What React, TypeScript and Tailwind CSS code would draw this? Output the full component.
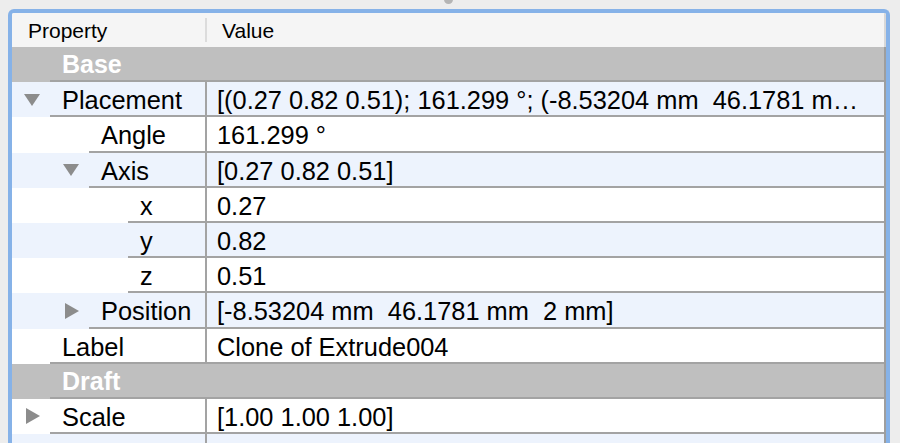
import React from "react";

type Row =
  | { kind: "group"; label: string }
  | {
      kind: "prop";
      level: number;
      expand?: "down" | "right";
      label: string;
      value: string;
    };

const rows: Row[] = [
  { kind: "group", label: "Base" },
  {
    kind: "prop",
    level: 0,
    expand: "down",
    label: "Placement",
    value: "[(0.27 0.82 0.51); 161.299 °; (-8.53204 mm  46.1781 m…",
  },
  { kind: "prop", level: 1, label: "Angle", value: "161.299 °" },
  { kind: "prop", level: 1, expand: "down", label: "Axis", value: "[0.27 0.82 0.51]" },
  { kind: "prop", level: 2, label: "x", value: "0.27" },
  { kind: "prop", level: 2, label: "y", value: "0.82" },
  { kind: "prop", level: 2, label: "z", value: "0.51" },
  {
    kind: "prop",
    level: 1,
    expand: "right",
    label: "Position",
    value: "[-8.53204 mm  46.1781 mm  2 mm]",
  },
  { kind: "prop", level: 0, label: "Label", value: "Clone of Extrude004" },
  { kind: "group", label: "Draft" },
  { kind: "prop", level: 0, expand: "right", label: "Scale", value: "[1.00 1.00 1.00]" },
  { kind: "prop", level: 0, label: "", value: "" },
];

function Tri({ dir }: { dir: "down" | "right" }) {
  if (dir === "down") {
    return (
      <svg width="16" height="12" viewBox="0 0 16 12" className="block">
        <polygon points="0,0 16,0 8,12" fill="#8c8c8c" />
      </svg>
    );
  }
  return (
    <svg width="14" height="16" viewBox="0 0 14 16" className="block">
      <polygon points="0,0 14,8 0,16" fill="#8c8c8c" />
    </svg>
  );
}

export default function App() {
  return (
    <div
      className="relative w-[900px] h-[443px] overflow-hidden bg-[#ededed]"
      style={{ fontFamily: '"Liberation Sans", Arial, sans-serif' }}
    >
      <div className="absolute left-[444px] top-[-5px] w-[9px] h-[9px] rounded-full bg-[#b5b5b5]" />
      <div className="h-full pt-[9px] pl-[8px] pr-[10px]">
        <div className="h-full border-[4px] border-b-0 border-[#86b2e8] rounded-t-[6px] bg-white overflow-hidden flex flex-col">
          {/* header */}
          <div className="h-[34px] shrink-0 flex bg-[#f5f5f5] text-[21px] text-black border-r-2 border-[#d8d8d8]">
            <div className="w-[193px] pl-[16px] pt-[1px] flex items-center">Property</div>
            <div className="w-[2px] my-[5px] bg-[#dcdcdc]" />
            <div className="flex-1 pl-[15px] pt-[1px] flex items-center">Value</div>
          </div>
          {rows.map((r, i) => {
            const bg =
              r.kind === "group" ? "bg-[#bfbfbf]" : i % 2 === 1 ? "bg-[#edf3fd]" : "bg-white";
            if (r.kind === "group") {
              return (
                <div
                  key={i}
                  className={`h-[35.2px] shrink-0 flex border-r-2 border-[#9e9e9e] ${bg}`}
                >
                  <div className="w-[38px] shrink-0" />
                  <div className="flex-1 pl-[12px] pt-[3px] flex items-center border-b-2 border-[#a3a3a3] text-white font-bold text-[25px]">
                    {r.label}
                  </div>
                </div>
              );
            }
            const indent = 38 + 39 * r.level;
            return (
              <div
                key={i}
                className={`h-[35.2px] shrink-0 flex border-r-2 border-[#9e9e9e] text-[25.4px] text-black ${bg}`}
              >
                <div className="w-[193px] shrink-0 flex">
                  <div
                    className="shrink-0 flex items-center justify-end pr-[10px]"
                    style={{ width: indent }}
                  >
                    {r.expand ? <Tri dir={r.expand} /> : null}
                  </div>
                  <div className="flex-1 min-w-0 pl-[12px] pt-[3px] flex items-center border-b-2 border-[#a3a3a3] whitespace-pre">
                    {r.label}
                  </div>
                </div>
                <div className="flex-1 min-w-0 pl-[10px] pt-[3px] flex items-center border-l-2 border-b-2 border-[#a3a3a3] whitespace-pre overflow-hidden">
                  {r.value}
                </div>
              </div>
            );
          })}
        </div>
      </div>
    </div>
  );
}
